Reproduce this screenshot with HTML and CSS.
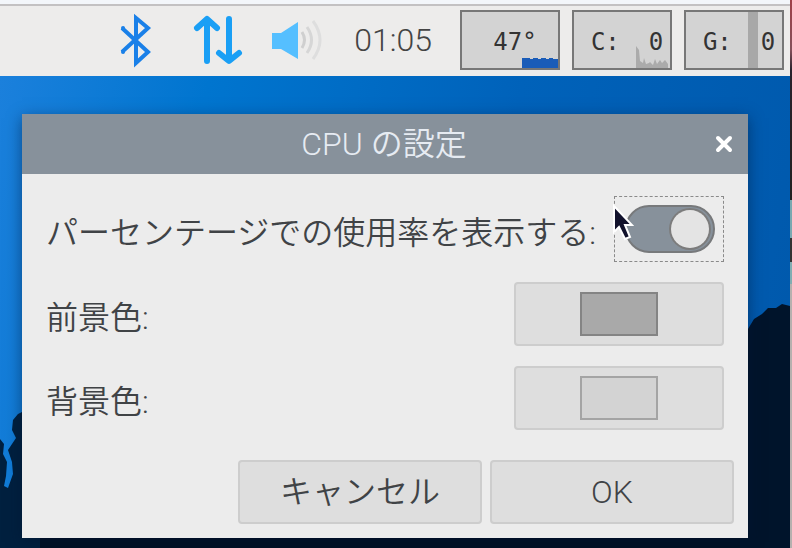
FILE: index.html
```
<!DOCTYPE html>
<html lang="ja">
<head>
    <meta charset="UTF-8">
    <meta name="viewport" content="width=device-width, initial-scale=1.0">
    <title>CPU の設定</title>
    <link rel="stylesheet" href="styles.css">
</head>
<body>
    <div class="desktop">
        <header class="panel">
            <svg class="tray-icon" viewBox="0 0 52 60" fill="none" stroke="#1a80e8" stroke-width="4">
                <path d="M11 18L37 42L25 53V8L37 18L11 42" stroke-linejoin="miter"/>
                <circle cx="12" cy="18" r="2" fill="#1a80e8" stroke="none"/>
                <circle cx="12" cy="42" r="2" fill="#1a80e8" stroke="none"/>
            </svg>
            <svg class="tray-icon" viewBox="0 0 52 60" fill="none" stroke="#1a9ff5" stroke-width="6" stroke-linecap="round" stroke-linejoin="round">
                <path d="M16 51V10M6 18L16 9L26 18"/>
                <path d="M38 9V50M28 43L38 51L48 43"/>
            </svg>
            <svg class="tray-icon" viewBox="0 0 52 60" fill="none" stroke-width="3">
                <path d="M1 23H10L27 12V49L10 39H1Z" fill="#55bfff"/>
                <path d="M31 22Q36 30 31 38" stroke="#cfcfcf"/>
                <path d="M36 17Q45 30 36 43" stroke="#d6d6d6"/>
                <path d="M42 11Q56 30 42 49" stroke="#dedede"/>
            </svg>
            <time class="clock">01:05</time>
            <div class="monitors">
                <div class="monitor">
                    <svg class="graph" viewBox="0 0 96 56">
                        <path d="M60 56V46H68V47H71V46H76V47H79V46H84V47H87V46H91V47H96V56Z" fill="#1a5cb8"/>
                    </svg>
                    <pre class="reading">47°</pre>
                </div>
                <div class="monitor">
                    <svg class="graph" viewBox="0 0 96 56">
                        <path d="M62 56V34L65 38L66 49L69 51L70 46L72 52L75 51L76 50L79 53L81 47L83 52L86 48L88 51L91 48L94 52V56Z" fill="#ababab"/>
                    </svg>
                    <pre class="reading">C:  0</pre>
                </div>
                <div class="monitor">
                    <svg class="graph" viewBox="0 0 96 56">
                        <path d="M62 0H72V56H62Z" fill="#a8a8a8"/>
                    </svg>
                    <pre class="reading">G:  0</pre>
                </div>
            </div>
        </header>

        <main class="wallpaper">
            <!-- tree line at both sides of the wallpaper -->
            <svg class="trees trees-left" viewBox="0 0 40 172" fill="#00203f">
                <path d="M0 63L4 68L3 78L7 86L6 100L4 110L8 112L13 98L12 86L8 74L12 68L16 62L12 54L13 44L18 38L24 35H40V172H0Z"/>
            </svg>
            <svg class="trees trees-right" viewBox="0 0 50 246" fill="#00142b">
                <path d="M0 33L8 27L14 17L22 12L28 6L36 6L42 2L50 4V246H0Z"/>
            </svg>

            <form class="dialog">
                <div class="titlebar">
                    <h1 class="title">CPU の設定</h1>
                    <button class="close" type="button" aria-label="閉じる">
                        <svg class="close-icon" viewBox="0 0 18 18" stroke="#fff" stroke-width="4" stroke-linecap="round">
                            <path d="M3 3L15 15M15 3L3 15"/>
                        </svg>
                    </button>
                </div>
                <div class="settings">
                    <div class="row">
                        <label class="label" for="showUsage">パーセンテージでの使用率を表示する:</label>
                        <div class="switch-box">
                            <input class="switch" type="checkbox" id="showUsage" checked>
                            <svg class="pointer" viewBox="0 0 22 38">
                                <path d="M2 2V28L7 23L13 35L18 33L13 21H20Z" fill="#12122c" stroke="#fff" stroke-width="2"/>
                            </svg>
                        </div>
                    </div>
                    <div class="row">
                        <label class="label" for="foreground">前景色:</label>
                        <input class="color" type="color" id="foreground" value="#a9a9a9">
                    </div>
                    <div class="row">
                        <label class="label" for="background">背景色:</label>
                        <input class="color color-light" type="color" id="background" value="#d3d3d3">
                    </div>
                </div>
                <div class="actions">
                    <button class="button" type="button">キャンセル</button>
                    <button class="button" type="submit">OK</button>
                </div>
            </form>
        </main>
    </div>
    <div class="edge"></div>
</body>
</html>
```
FILE: styles.css
```
* {
    box-sizing: border-box;
}

body {
    margin: 0;
    min-height: 100vh;
    display: flex;
    overflow: hidden;
    font-family: Roboto, "Noto Sans CJK JP", sans-serif;
    font-size: 32px;
    font-weight: 350;
    line-height: 40px;
    color: #404346;
}

.desktop {
    flex: 1;
    display: flex;
    flex-direction: column;
}

.edge {
    width: 2px;
    background: linear-gradient(#a04048 0, #84505a 50px, #28222c 70px, #222 200px, #78a8b0 200px, #78a8b0 238px, #333 238px, #333 262px, #80adb2 262px, #80adb2 284px, #b5b0ae 284px);
}

/* Top panel */
.panel {
    display: flex;
    align-items: center;
    justify-content: flex-end;
    gap: 28px;
    height: 76px;
    padding: 0 6px 0 0;
    background: #edeceb;
    border-top: 4px solid #f3f6fa;
    box-shadow: inset 0 2px #c3c1c2;
}

.tray-icon {
    width: 52px;
    height: 60px;
}

.clock {
    width: 81px;
    text-align: right;
    color: #444;
}

.monitors {
    display: flex;
    gap: 12px;
}

.monitor {
    position: relative;
    width: 100px;
    height: 60px;
    display: flex;
    align-items: center;
    justify-content: center;
    padding: 4px 0 0 10px;
    background: #d3d3d3;
    border: 2px solid #777;
}

.graph {
    position: absolute;
    inset: 0;
    width: 100%;
    height: 100%;
}

.reading {
    position: relative;
    margin: 0;
    font-family: "DejaVu Sans Mono", monospace;
    font-size: 24px;
    font-weight: normal;
    line-height: 28px;
    color: #333;
}

/* Wallpaper */
.wallpaper {
    position: relative;
    flex: 1;
    padding: 38px 42px 10px 22px;
    background:
        linear-gradient(transparent 440px, #000f22 460px),
        linear-gradient(100deg, #1b80dc 0, #0075cf 24%, #0062ba 60%, #0058ab 100%);
}

.trees {
    position: absolute;
    bottom: 0;
}

.trees-left {
    left: 0;
    width: 40px;
    height: 172px;
}

.trees-right {
    right: 0;
    width: 50px;
    height: 246px;
}

/* Dialog */
.dialog {
    position: relative;
    background: #ececec;
    box-shadow: 0 4px 14px rgba(0, 20, 50, 0.5);
}

.titlebar {
    display: flex;
    align-items: center;
    height: 60px;
    padding: 0 15px 0 31px;
    background: #87919b;
    color: #e6ebf2;
}

.title {
    flex: 1;
    margin: 0;
    font-size: 32px;
    font-weight: 350;
    text-align: center;
}

.close {
    display: flex;
    padding: 0;
    border: none;
    background: none;
    cursor: pointer;
}

.close-icon {
    width: 18px;
    height: 18px;
}

.settings {
    display: flex;
    flex-direction: column;
    gap: 20px;
    padding: 22px 24px 30px;
}

.row {
    display: flex;
    align-items: center;
    justify-content: space-between;
    white-space: nowrap;
}

.label {
    padding-top: 8px;
}

.switch-box {
    position: relative;
    display: flex;
    align-items: center;
    height: 66px;
    padding: 0 8px 0 10px;
    border: 1px dashed #8a8a8a;
}

.switch {
    appearance: none;
    width: 90px;
    height: 48px;
    margin: 0;
    padding: 4px;
    display: flex;
    justify-content: flex-end;
    border: 2px solid #77797b;
    border-radius: 24px;
    background: #87919b;
}

.switch::before {
    content: "";
    width: 38px;
    height: 38px;
    margin: -1px 0;
    border-radius: 50%;
    background: #e4e4e4;
    box-shadow: 0 0 0 2px #7c7c7c;
}

.pointer {
    position: absolute;
    left: -3px;
    top: 7px;
    width: 22px;
    height: 38px;
}

.color {
    appearance: none;
    width: 210px;
    height: 64px;
    padding: 8px 64px;
    border: 2px solid #cdcdcd;
    border-radius: 4px;
    background: #dedede;
}

.color::-webkit-color-swatch-wrapper {
    padding: 0;
}

.color::-webkit-color-swatch {
    border: 2px solid #848484;
    border-radius: 0;
}

.color-light::-webkit-color-swatch {
    border-color: #a4a4a4;
}

.actions {
    display: flex;
    justify-content: flex-end;
    gap: 8px;
    padding: 0 14px 14px;
}

.button {
    width: 244px;
    height: 64px;
    padding: 0;
    border: 2px solid #cdcdcd;
    border-radius: 4px;
    background: #dedede;
    color: #404346;
    font: inherit;
    cursor: pointer;
}
```
